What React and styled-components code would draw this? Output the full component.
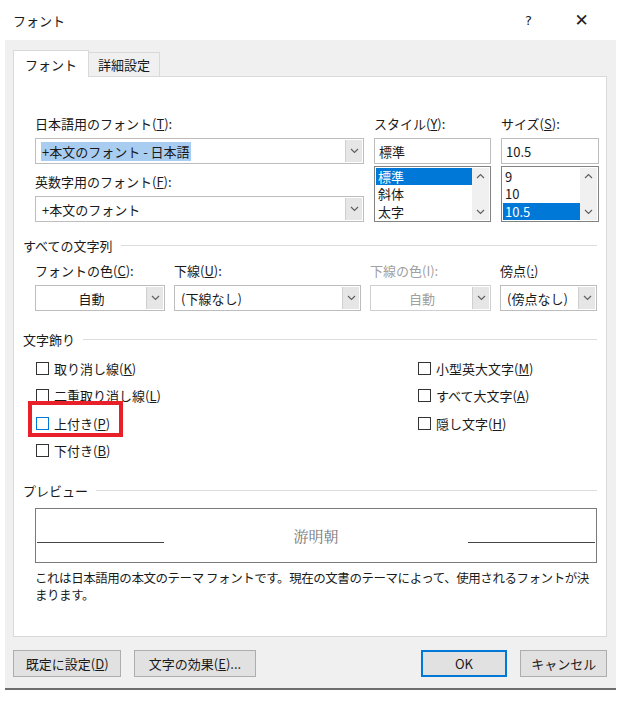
import React from "react";
import styled, { createGlobalStyle } from "styled-components";

const Global = createGlobalStyle`
  body { margin: 0; background: #fff; }
  * { box-sizing: border-box; }
`;

const Dialog = styled.div`
  width: 621px;
  height: 706px;
  background: #fff;
  font-family: "Noto Sans CJK JP", "Noto Sans", sans-serif;
  font-size: 13px;
  color: #1a1a1a;
`;

const TitleBar = styled.div`
  height: 40px;
  display: flex;
  align-items: center;
  padding: 0 13px;
  font-size: 13px;
`;

const TitleText = styled.div`
  flex: 1;
`;

const TitleBtn = styled.div`
  width: 53px;
  text-align: center;
  font-size: ${(p) => p.size || 14}px;
  font-family: "DejaVu Sans", sans-serif;
  color: #222;
`;

const Body = styled.div`
  margin: 0 5px;
  height: 650px;
  background: #f0f0f0;
  border-bottom: 2px solid #6e6e6e;
  padding: 10px 9px 0 8px;
`;

const Tabs = styled.div`
  display: flex;
  align-items: flex-end;
  height: 27px;
`;

const Tab = styled.div`
  height: ${(p) => (p.active ? 27 : 25)}px;
  padding: 0 ${(p) => (p.active ? 11 : 9)}px;
  display: flex;
  align-items: center;
  background: ${(p) => (p.active ? "#fff" : "#f0f0f0")};
  border: 1px solid #d9d9d9;
  border-bottom: ${(p) => (p.active ? "none" : "1px solid #d9d9d9")};
  margin-left: ${(p) => (p.active ? 0 : -1)}px;
  position: relative;
  z-index: ${(p) => (p.active ? 1 : 0)};
`;

const Panel = styled.div`
  background: #fff;
  border: 1px solid #d9d9d9;
  margin-top: -1px;
  height: 561px;
  padding: 37px 9px 0 9px;
`;

const TopGrid = styled.div`
  display: grid;
  grid-template-columns: 329px 117px 98px;
  column-gap: 10px;
  margin-left: 12px;
`;

const Field = styled.div`
  display: flex;
  flex-direction: column;
`;

const Label = styled.div`
  height: 20px;
  line-height: 20px;
  margin-bottom: 4px;
  margin-top: ${(p) => p.mt || 0}px;
  color: ${(p) => (p.disabled ? "#a0a0a0" : "inherit")};
`;

const ComboBox = styled.div`
  height: 26px;
  display: flex;
  border: 1px solid ${(p) => (p.disabled ? "#cfcfcf" : "#bdbdbd")};
  background: #fff;
  padding: 1px;
`;

const ComboText = styled.div`
  flex: 1;
  display: flex;
  align-items: center;
  justify-content: ${(p) => (p.center ? "center" : "flex-start")};
  padding-left: ${(p) => (p.center ? 0 : 4)}px;
  color: ${(p) => (p.disabled ? "#a0a0a0" : "inherit")};
  span {
    background: ${(p) => (p.selected ? "#a9cdf0" : "transparent")};
    padding: 0 1px;
  }
`;

const DropBtn = styled.div`
  width: 17px;
  background: #e6e6e6;
  border-left: 1px solid #cfcfcf;
  display: flex;
  align-items: center;
  justify-content: center;
`;

const Chevron = ({ up }) => (
  <svg width="9" height="6" viewBox="0 0 9 6">
    <path
      d={up ? "M1 5 L4.5 1.5 L8 5" : "M1 1 L4.5 4.5 L8 1"}
      fill="none"
      stroke="#606060"
      strokeWidth="1.2"
    />
  </svg>
);

const Input = styled.div`
  height: 26px;
  border: 1px solid #bdbdbd;
  padding: 0 4px;
  display: flex;
  align-items: center;
`;

const List = styled.div`
  height: 56px;
  margin-top: 2px;
  border: 1px solid #828282;
  display: flex;
  padding: 1px;
`;

const ListItems = styled.div`
  flex: 1;
  display: flex;
  flex-direction: column;
`;

const ListItem = styled.div`
  height: 17.5px;
  line-height: 17px;
  padding-left: 2px;
  background: ${(p) => (p.selected ? "#0078d7" : "transparent")};
  color: ${(p) => (p.selected ? "#fff" : "inherit")};
`;

const ScrollBar = styled.div`
  width: 17px;
  display: flex;
  flex-direction: column;
  justify-content: space-between;
  align-items: center;
  background: #f0f0f0;
  padding: 5px 0;
`;

const RightCol = styled.div`
  display: flex;
  flex-direction: column;
`;

const GroupHead = styled.div`
  display: flex;
  align-items: center;
  gap: 8px;
  height: 20px;
  margin-top: ${(p) => p.mt}px;
  &::after {
    content: "";
    flex: 1;
    height: 1px;
    background: #dcdcdc;
  }
`;

const Row4 = styled.div`
  display: grid;
  grid-template-columns: 130px 187px 121px 97px;
  column-gap: 9px;
  margin: 6px 0 0 12px;
`;

const ChecksGrid = styled.div`
  display: grid;
  grid-template-columns: 382px 200px;
  margin: 6px 0 0 13px;
  grid-auto-rows: 27.3px;
`;

const Check = styled.div`
  display: flex;
  align-items: center;
  gap: 5px;
  position: relative;
`;

const Box = styled.span`
  width: 13px;
  height: 13px;
  border: 1px solid ${(p) => (p.focus ? "#0078d7" : "#333")};
  background: #fff;
`;

const Highlight = styled.div`
  position: absolute;
  left: -8px;
  top: -9px;
  width: 95px;
  height: 36px;
  border: 4px solid #e8202a;
`;

const Preview = styled.div`
  margin: 8px 0 0 12px;
  height: 55px;
  border: 1px solid #7a7a7a;
  display: flex;
  align-items: center;
  padding: 0 1px;
`;

const Rule = styled.div`
  width: 127px;
  height: 1px;
  background: #444;
  margin-top: 14px;
`;

const PreviewText = styled.div`
  flex: 1;
  text-align: center;
  font-family: "Noto Serif CJK JP", "Noto Sans CJK JP", serif;
  font-size: 15px;
  color: #777;
`;

const Desc = styled.div`
  margin: 6px 0 0 12px;
  line-height: 17px;
  font-size: 12.5px;
  letter-spacing: -0.45px;
`;

const Buttons = styled.div`
  display: flex;
  gap: 13px;
  margin-top: 13px;
`;

const Button = styled.div`
  height: 27px;
  width: ${(p) => p.w}px;
  margin-left: ${(p) => p.ml || 0}px;
  display: flex;
  align-items: center;
  justify-content: center;
  background: #e1e1e1;
  border: ${(p) => (p.primary ? "2px solid #0078d7" : "1px solid #adadad")};
`;

const Combo = ({ text, center, disabled, selected }) => (
  <ComboBox disabled={disabled}>
    <ComboText center={center} disabled={disabled} selected={selected}>
      <span>{text}</span>
    </ComboText>
    <DropBtn>
      <Chevron />
    </DropBtn>
  </ComboBox>
);

const ListBox = ({ items, sel }) => (
  <List>
    <ListItems>
      {items.map((it) => (
        <ListItem key={it} selected={it === sel}>
          {it}
        </ListItem>
      ))}
    </ListItems>
    <ScrollBar>
      <Chevron up />
      <Chevron />
    </ScrollBar>
  </List>
);

const CheckItem = ({ label, k, focus }) => (
  <Check>
    <Box focus={focus} />
    <span>
      {label}(<u>{k}</u>)
    </span>
    {focus && <Highlight />}
  </Check>
);

export default function App() {
  return (
    <Dialog>
      <Global />
      <TitleBar>
        <TitleText>フォント</TitleText>
        <TitleBtn size={13}>?</TitleBtn>
        <TitleBtn size={17}>✕</TitleBtn>
      </TitleBar>
      <Body>
        <Tabs>
          <Tab active>フォント</Tab>
          <Tab>詳細設定</Tab>
        </Tabs>
        <Panel>
          <TopGrid>
            <Field>
              <Label>日本語用のフォント(<u>T</u>):</Label>
              <Combo text="+本文のフォント - 日本語" selected />
              <Label mt={8}>英数字用のフォント(<u>F</u>):</Label>
              <Combo text="+本文のフォント" />
            </Field>
            <RightCol>
              <Label>スタイル(<u>Y</u>):</Label>
              <Input>標準</Input>
              <ListBox items={["標準", "斜体", "太字"]} sel="標準" />
            </RightCol>
            <RightCol>
              <Label>サイズ(<u>S</u>):</Label>
              <Input>10.5</Input>
              <ListBox items={["9", "10", "10.5"]} sel="10.5" />
            </RightCol>
          </TopGrid>

          <GroupHead mt={13}>すべての文字列</GroupHead>
          <Row4>
            <Field>
              <Label>フォントの色(<u>C</u>):</Label>
              <Combo text="自動" center />
            </Field>
            <Field>
              <Label>下線(<u>U</u>):</Label>
              <Combo text="(下線なし)" />
            </Field>
            <Field>
              <Label disabled>下線の色(I):</Label>
              <Combo text="自動" center disabled />
            </Field>
            <Field>
              <Label>傍点(<u>:</u>)</Label>
              <Combo text="(傍点なし)" />
            </Field>
          </Row4>

          <GroupHead mt={18}>文字飾り</GroupHead>
          <ChecksGrid>
            <CheckItem label="取り消し線" k="K" />
            <CheckItem label="小型英大文字" k="M" />
            <CheckItem label="二重取り消し線" k="L" />
            <CheckItem label="すべて大文字" k="A" />
            <CheckItem label="上付き" k="P" focus />
            <CheckItem label="隠し文字" k="H" />
            <CheckItem label="下付き" k="B" />
          </ChecksGrid>

          <GroupHead mt={16}>プレビュー</GroupHead>
          <Preview>
            <Rule />
            <PreviewText>游明朝</PreviewText>
            <Rule />
          </Preview>
          <Desc>
            これは日本語用の本文のテーマ フォントです。現在の文書のテーマによって、使用されるフォントが決まります。
          </Desc>
        </Panel>
        <Buttons>
          <Button w={110}>既定に設定(<u>D</u>)</Button>
          <Button w={123}>文字の効果(<u>E</u>)...</Button>
          <Button w={88} ml={152} primary>OK</Button>
          <Button w={88}>キャンセル</Button>
        </Buttons>
      </Body>
    </Dialog>
  );
}
